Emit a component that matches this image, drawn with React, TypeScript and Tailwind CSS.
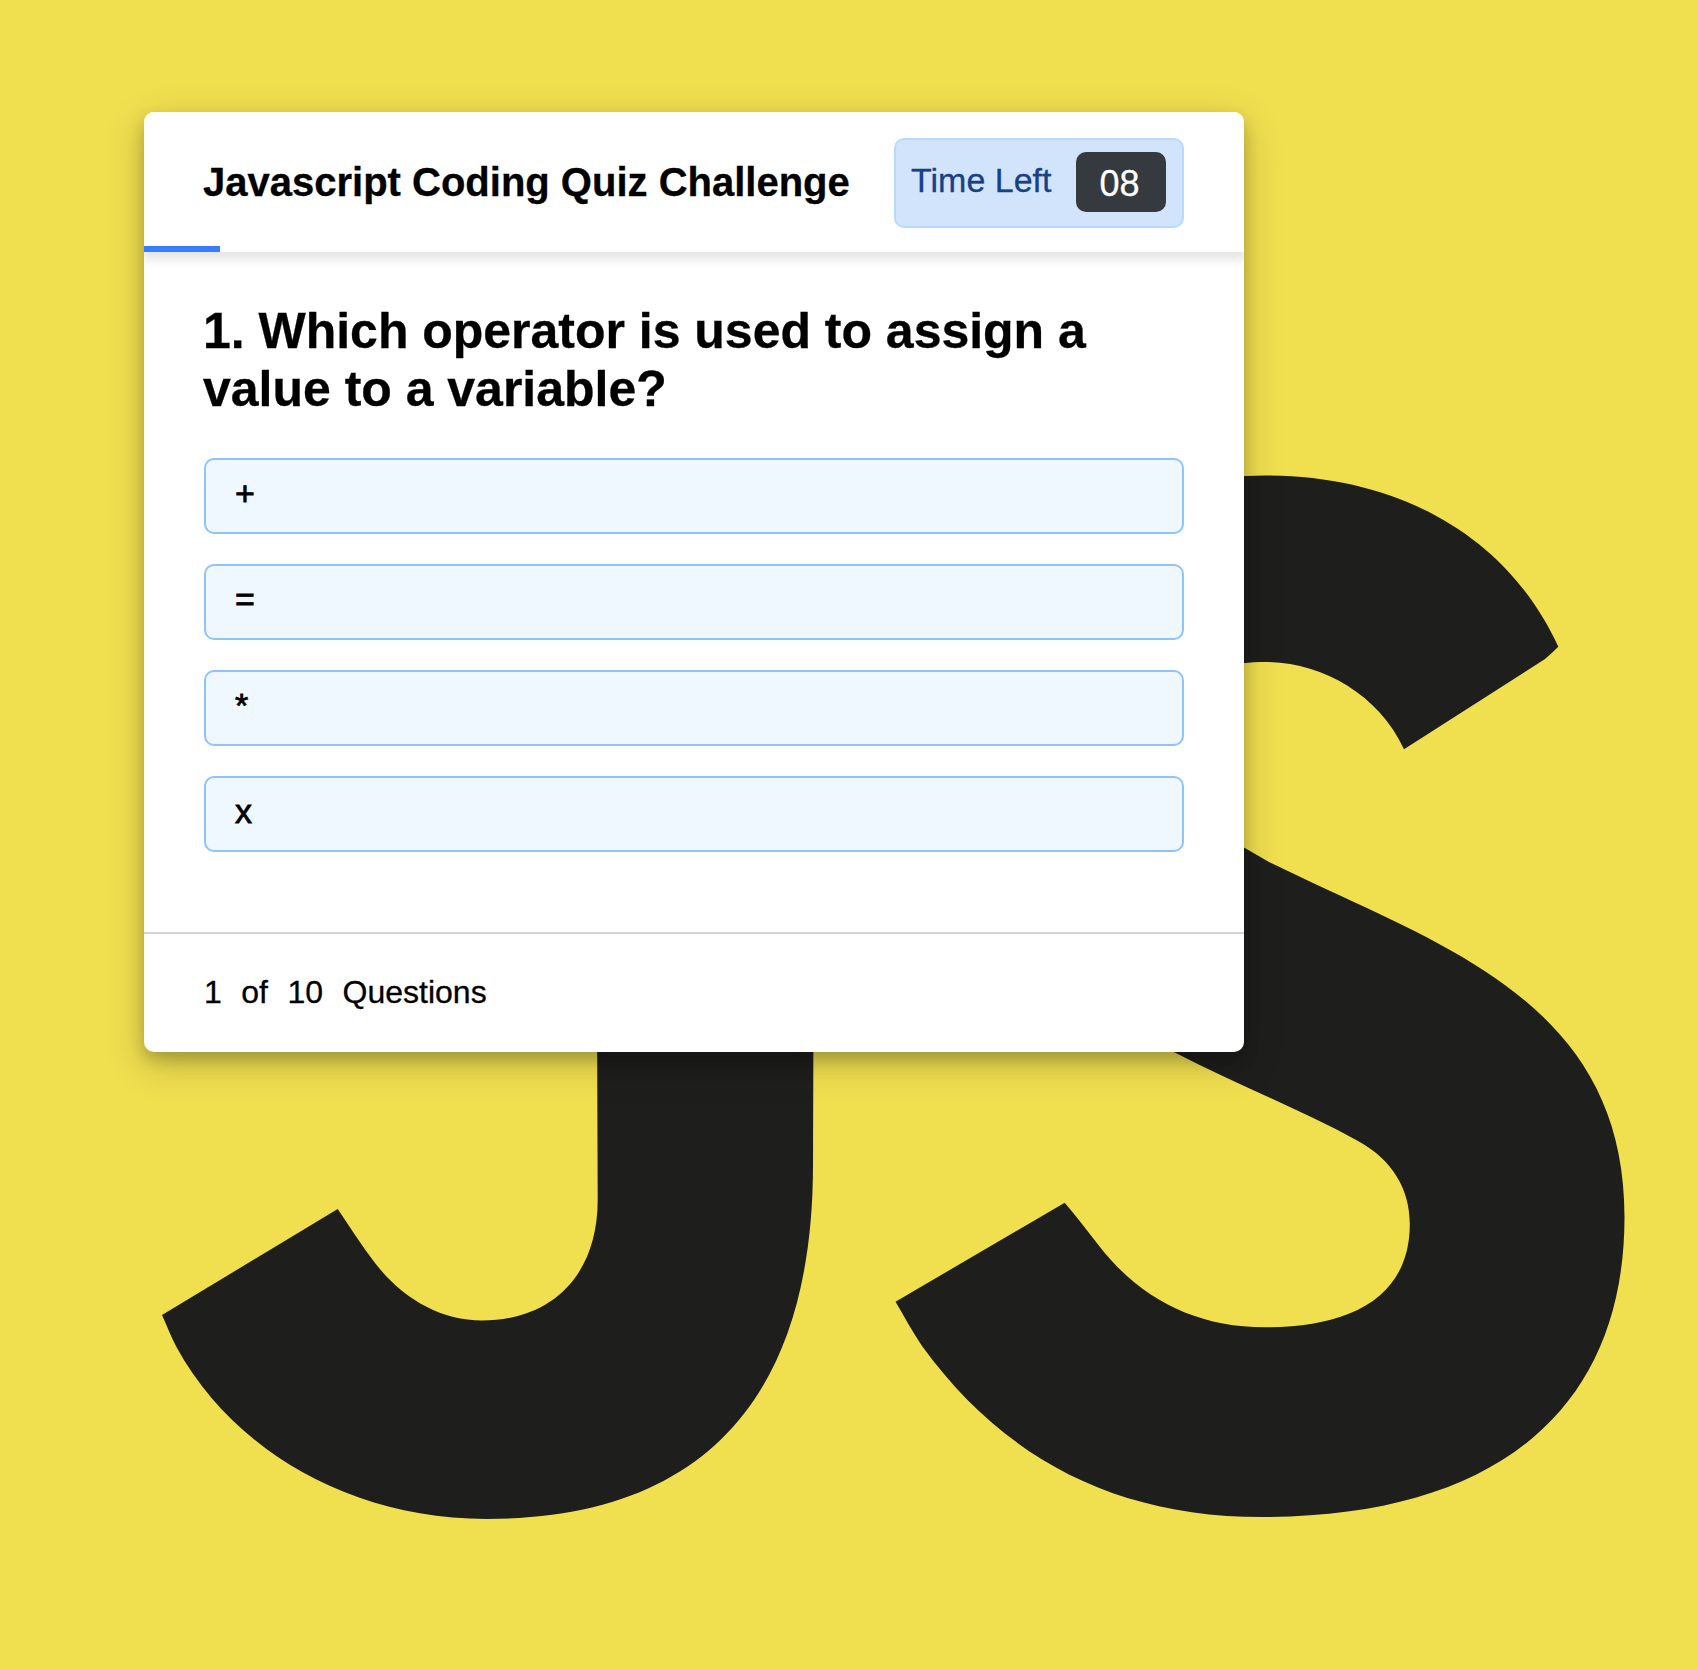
const options = ['+', '=', '*', 'x'];

function Backdrop() {
  return (
    <svg
      className="absolute inset-0 h-[1670px] w-[1698px]"
      viewBox="0 0 1698 1670"
      fill="#1e1e1c"
      aria-hidden="true"
    >
      <path d="M597 1000L597.700 1200C597.700 1275 552 1320.500 482 1320.500C440 1320.500 402 1298 375 1263C362 1246 350 1227 337.700 1209L162 1315C167 1326 171 1337 177 1348C231 1446 345 1519 487 1519C708 1519 813 1392 813 1165L813.500 1000Z" />
      <path d="M1558.300 646.700C1510 541 1405 475.500 1265 475.500C1120 475.500 1010 570 1010 715C1010 890 1115 1010 1173.800 1052C1235 1084 1300 1109 1358 1141C1393 1160 1409.800 1190 1409.800 1224C1409.800 1301 1345 1327.300 1265 1327.300C1195 1327.300 1140 1298 1100 1247C1089 1233 1077 1217 1064.700 1202.700L895.500 1301.700C904 1316 912 1331 922 1346C1002 1456 1112 1517 1263 1517C1493 1517 1624.500 1412 1624.500 1217C1624.500 1029 1485.600 962.700 1340 895.500C1315 884 1290 872 1269 862L1244 847.500C1215 828 1195 800 1195 758L1195 690C1205 668 1235 662 1265 662C1320 662 1378 693 1404 749.300L1545 659Q1552 653 1558.300 646.700Z" />
    </svg>
  );
}

function Timer() {
  return (
    <div className="mt-[2px] flex h-[90px] w-[290px] items-center justify-between rounded-[10px] border-2 border-[#b8daff] bg-[#d1e4fb] px-[15px] pr-4">
      <span className="mb-[7px] text-[34px] leading-[38px] text-[#184086] [-webkit-text-stroke:0.3px_#184086]">
        Time Left
      </span>
      <span className="mb-[2px] flex h-[60px] w-[90px] items-center justify-center rounded-[10px] bg-[#343a3e] pt-[3px] pr-[3px] text-[36px] leading-[40px] text-white [-webkit-text-stroke:0.3px_white]">
        08
      </span>
    </div>
  );
}

export default function App() {
  return (
    <main className="relative h-[1670px] w-[1698px] overflow-hidden bg-[#f0df4f] pt-28 pl-36 font-['Liberation_Sans',Arial,sans-serif] text-black">
      <Backdrop />
      <div className="relative flex h-[940px] w-[1100px] flex-col rounded-[10px] bg-white shadow-[0_8px_16px_rgba(0,0,0,0.2),0_12px_40px_rgba(0,0,0,0.19)]">
        <header className="relative flex h-[140px] shrink-0 items-center justify-between rounded-t-[10px] bg-white pr-[60px] pl-[59px]">
          <h1 className="text-[40px] leading-[46px] font-bold [-webkit-text-stroke:0.3px_black]">
            Javascript Coding Quiz Challenge
          </h1>
          <Timer />
          <div className="absolute bottom-0 left-0 h-[6px] w-[76px] bg-[#377dff]" />
        </header>
        <section className="overflow-hidden">
          <div className="-mt-5 h-5 shadow-[0_6px_10px_2px_rgba(0,0,0,0.1)]" />
          <div className="px-[60px] pt-[50px]">
            <h2 className="-ml-px text-[50px] leading-[58px] font-bold tracking-[-0.02px] [-webkit-text-stroke:0.3px_black]">
              1. Which operator is used to assign a value to a variable?
            </h2>
            <div className="mt-10 flex flex-col gap-[30px]">
              {options.map((option) => (
                <button
                  key={option}
                  className="flex h-[76px] items-start rounded-[10px] border-2 border-[#90c3fb] bg-[#f0f8ff] px-[29px] pt-[14px] text-[34px] leading-[39px] [-webkit-text-stroke:0.8px_black]"
                >
                  {option}
                </button>
              ))}
            </div>
          </div>
        </section>
        <footer className="mt-auto flex h-[120px] items-center gap-[19.5px] border-t-2 border-[#d3d3d3] px-[60px] pb-[2px] text-[32px] leading-[37px] [-webkit-text-stroke:0.3px_black]">
          <span>1</span>
          <span>of</span>
          <span>10</span>
          <span>Questions</span>
        </footer>
      </div>
    </main>
  );
}
